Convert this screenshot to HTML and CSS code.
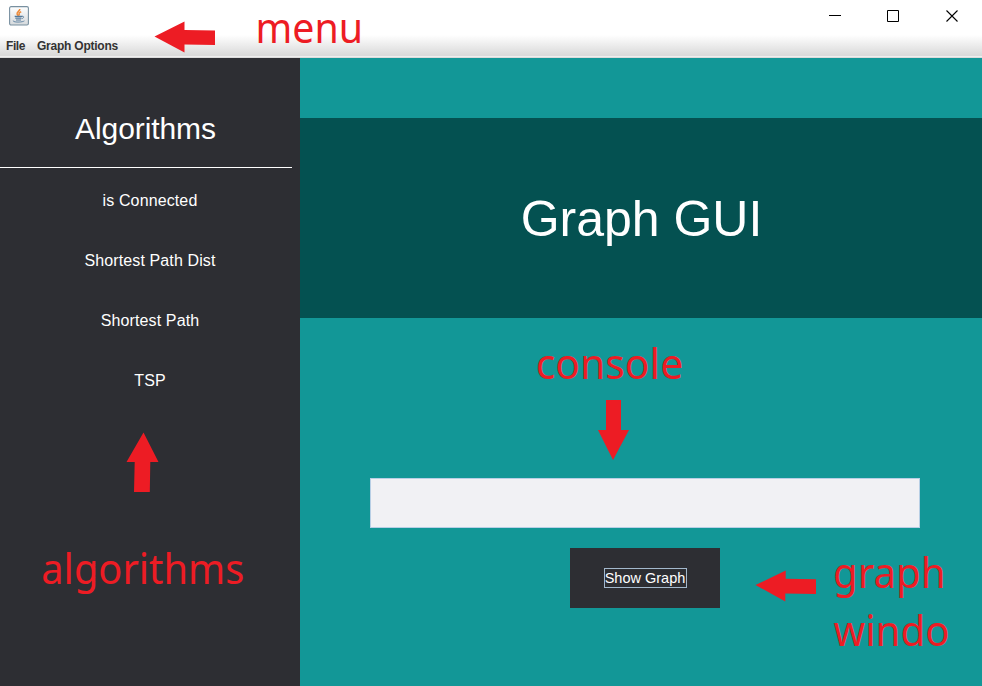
FILE: index.html
```html
<!DOCTYPE html>
<html lang="en">
<head>
<meta charset="utf-8">
<title>Graph GUI</title>
<link rel="stylesheet" href="styles.css">
</head>
<body>
<div class="window">
  <header class="titlebar">
    <svg class="app-icon" width="20" height="20" viewBox="0 0 20 20">
      <defs><linearGradient id="tile" x1="0" y1="0" x2="0" y2="1"><stop offset="0" stop-color="#fff"/><stop offset="1" stop-color="#d5d9dc"/></linearGradient></defs>
      <rect x=".6" y=".6" width="18.8" height="18.4" rx="1.5" fill="url(#tile)" stroke="#7890a0" stroke-width="1.1"/>
      <path d="M10.8 3C11 5 7.3 6 8.1 8.2L9.5 10M12.2 5.7C9.6 6.7 9.8 7.8 10.5 9.5" fill="none" stroke="#ed8b3b" stroke-width="1.5"/>
      <path d="M5.7 10.3h7.6M6.3 12.2h6.2M7 14h5" fill="none" stroke="#54799a" stroke-width="1.2"/>
      <path d="M13 10.3c2.500-.4 2 1.800-.2 2.400M4.200 14.600c-1 1.800 8.700 2 11.200.3" fill="none" stroke="#6688a5" stroke-width="1"/>
    </svg>
    <svg class="controls" width="130" height="14" viewBox="0 0 130 14" fill="none" stroke="#000">
      <path d="M0 6.5h12M58.5 1.5h11v11h-11z"/>
      <path d="M117.500 1.500l11 11M128.500 1.500l-11 11" stroke-width="1.1"/>
    </svg>
  </header>
  <nav class="menubar"><span class="menu-file">File</span><span class="menu-options">Graph Options</span></nav>
  <main class="content">
    <aside class="sidebar">
      <h2 class="heading">Algorithms</h2>
      <div class="item">is Connected</div>
      <div class="item">Shortest Path Dist</div>
      <div class="item">Shortest Path</div>
      <div class="item">TSP</div>
    </aside>
    <section class="panel">
      <h1 class="banner">Graph GUI</h1>
      <div class="console"></div>
      <button class="show"><span class="focus">Show Graph</span></button>
    </section>
  </main>
  <svg class="notes" width="982" height="686" viewBox="0 0 982 686">
    <path d="M154.500 36.500L184.500 21.500V30L215 30.500V45L184.500 44.500V52.500z"/>
    <path d="M143.500 432.500L158.500 462H150.300L149.800 492H134L134.700 462H126.500z"/>
    <path d="M606 400H621V430H629L613 460L598 430H606z"/>
    <path d="M755.500 585L785.700 570.500V578.700L816 579.200V594L785.300 593.500V601.500z"/>
    <text x="255.500" y="43.300" textLength="107.500" lengthAdjust="spacingAndGlyphs">menu</text>
    <text x="41.300" y="584" textLength="203" lengthAdjust="spacingAndGlyphs">algorithms</text>
    <text x="535.700" y="379" textLength="147.500" lengthAdjust="spacingAndGlyphs">console</text>
    <text x="833" y="588" textLength="112.500" lengthAdjust="spacingAndGlyphs">graph</text>
    <text x="833.500" y="645.500" textLength="116" lengthAdjust="spacingAndGlyphs">windo</text>
  </svg>
</div>
</body>
</html>
```

FILE: styles.css
```css
* { box-sizing: border-box; }
body { margin: 0; font-family: "Liberation Sans", Arial, sans-serif; }
.window { position: relative; width: 982px; height: 686px; display: flex; flex-direction: column; overflow: hidden; background: #fff; }
.titlebar { height: 35px; display: flex; justify-content: space-between; padding: 6px 23px 0 9px; }
.controls { margin-top: 3px; }
.menubar { height: 23px; display: flex; gap: 12px; padding: 0 6px; line-height: 23px; font-size: 12px; font-weight: bold; color: #333; background: linear-gradient(#fff, #dadada 20px, #dadada); border-bottom: 1px solid #dadada; box-shadow: inset 0 -1px #eee; }
.menu-file { width: 19px; letter-spacing: -.45px; }
.menu-options { letter-spacing: -.23px; }
.content { flex: 1; display: flex; }
.sidebar { width: 300px; background: #2d2e33; color: #fff; }
.heading { margin: 0 8px 3px 0; height: 110px; padding: 53px 1px 0 0; border-bottom: 1px solid #fff; text-align: center; font-size: 30px; line-height: 35px; font-weight: normal; letter-spacing: -.08px; }
.item { height: 60px; line-height: 60px; font-size: 16px; text-align: center; letter-spacing: .12px; }
.panel { flex: 1; display: flex; flex-direction: column; background: #129797; }
.banner { margin: 60px 0 160px; padding-left: 1px; height: 200px; line-height: 202px; text-align: center; font-size: 50px; font-weight: normal; color: #fff; background: #045151; }
.console { width: 550px; height: 50px; margin-left: 70px; background: #f1f1f4; border: 1px solid #b8cfe5; }
.show { width: 150px; height: 60px; margin: 20px 0 0 270px; padding: 0; border: 0; background: #2d2e33; color: #fff; font: 14.5px "Liberation Sans", Arial, sans-serif; display: flex; align-items: center; justify-content: center; }
.focus { width: 83px; height: 20px; line-height: 18px; border: 1px solid #a3b8cc; white-space: nowrap; display: flex; justify-content: center; }
.notes { position: absolute; inset: 0; fill: #ed1c24; font-family: "Noto Sans", sans-serif; font-size: 41px; pointer-events: none; }
```
